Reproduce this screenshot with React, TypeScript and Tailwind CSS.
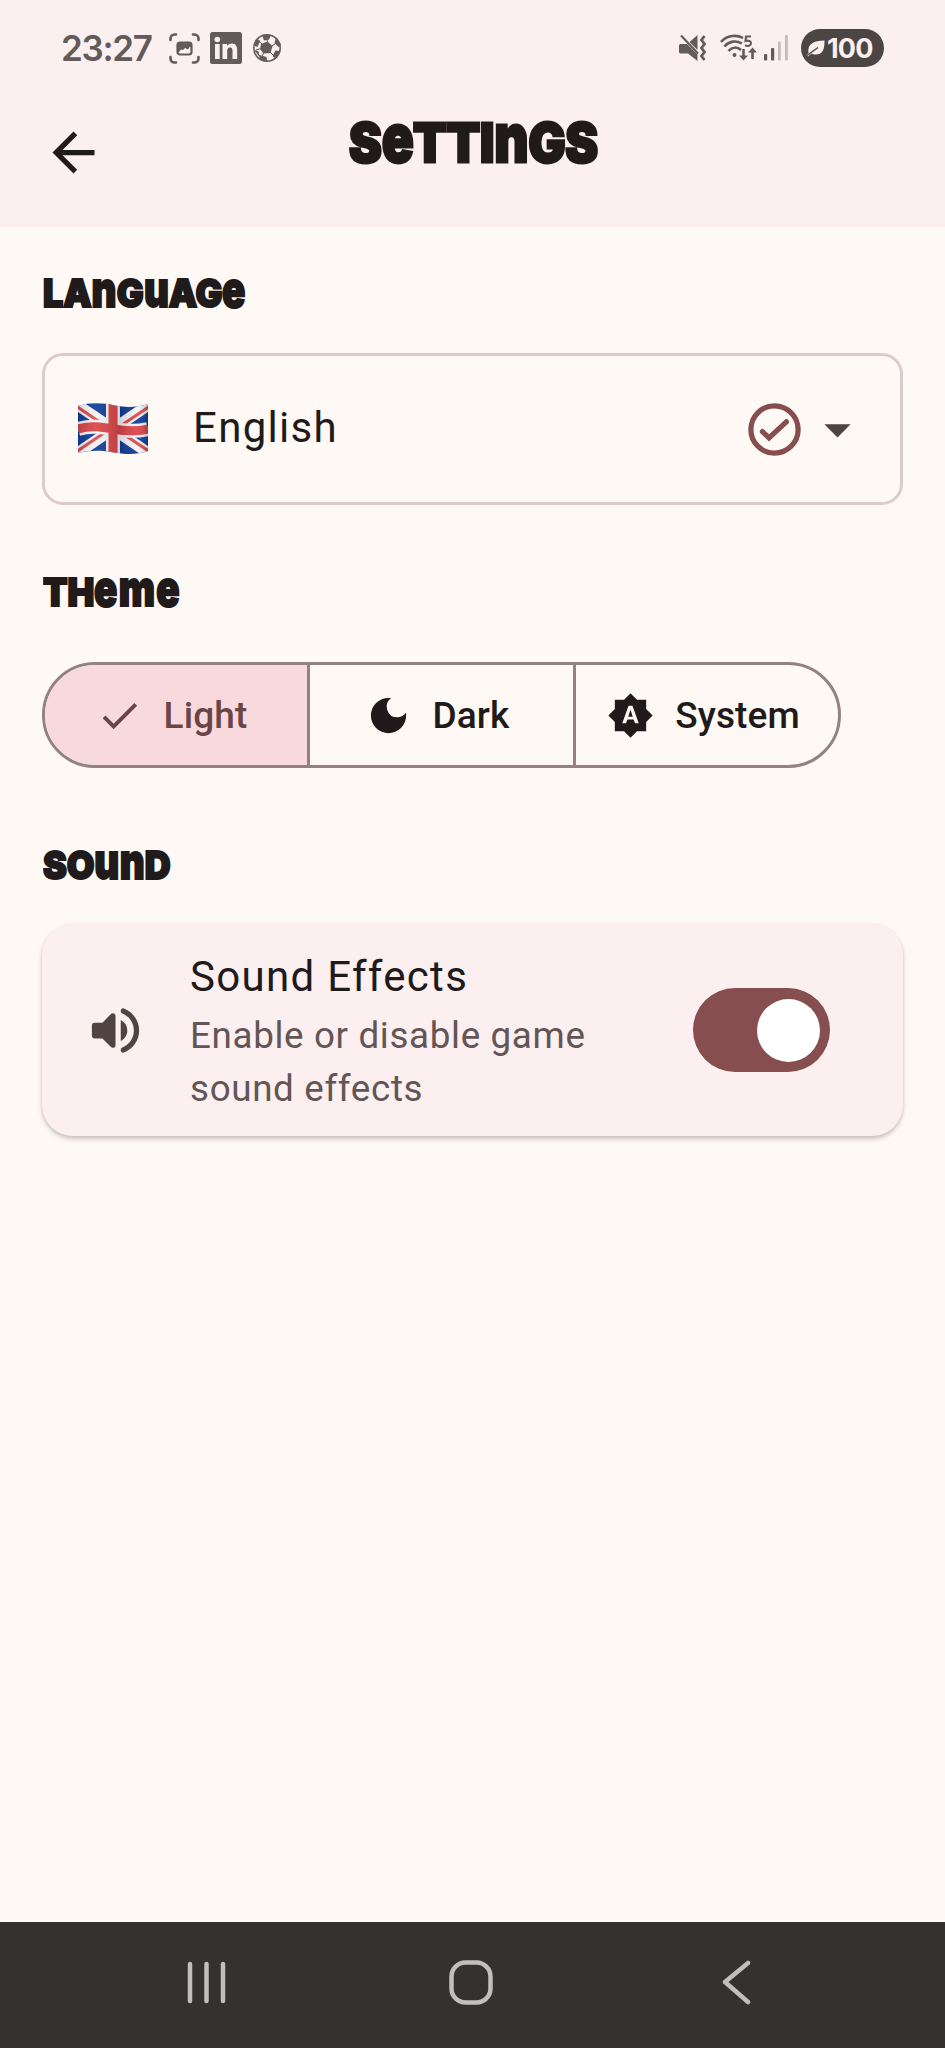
import React, { useState } from "react";

const FULL_HEIGHT_LOWERCASE = "enmu";

/* Unicase display lettering: some letters stay lowercase but reach cap height. */
function Unicase({ text, className }: { text: string; className: string }) {
  return (
    <span
      className={`inline-block origin-left whitespace-nowrap font-['Inter',sans-serif] font-black leading-none ${className}`}
    >
      {text.split("").map((ch, i) =>
        FULL_HEIGHT_LOWERCASE.includes(ch) ? (
          <span key={i} className="inline-block text-[1.28em] leading-none [scale:0.84_1] -mx-[0.05em]">
            {ch}
          </span>
        ) : (
          <span key={i} className="uppercase">
            {ch}
          </span>
        ),
      )}
    </span>
  );
}

function Material({ d, className }: { d: string; className: string }) {
  return (
    <svg viewBox="0 0 24 24" className={`shrink-0 ${className}`} fill="currentColor">
      <path d={d} />
    </svg>
  );
}

function CheckCircle() {
  return (
    <svg
      viewBox="0 0 24 24"
      className="h-[63px] w-[63px] shrink-0 text-[#874e50]"
      fill="none"
      stroke="currentColor"
      strokeWidth="2"
      strokeLinecap="round"
    >
      <circle cx="12" cy="12" r="9" />
      <path d="m7.400 12.800 2.500 2.400 6.600-6.100" />
    </svg>
  );
}

function ScanIcon() {
  return (
    <svg viewBox="0 0 31 31" className="h-[31px] w-[31px]" fill="none" stroke="currentColor" strokeWidth="2.6" strokeLinecap="round">
      <path d="M1.500 7V5.500a4 4 0 0 1 4-4H7M24 1.500h1.500a4 4 0 0 1 4 4V7M29.500 24v1.500a4 4 0 0 1-4 4H24M7 29.500H5.500a4 4 0 0 1-4-4V24" />
      <rect x="8.500" y="9.500" width="14" height="12" rx="2.500" strokeWidth="2.200" />
      <path d="M8.500 9.500h14v4.500h-2l-1.500 2.500-3-1.500-2 2-2-.5-2 2.500H8.500z" fill="currentColor" stroke="none" />
    </svg>
  );
}

function LinkedInIcon() {
  return (
    <svg viewBox="0 0 32 32" className="h-8 w-8">
      <rect width="32" height="32" rx="2.500" fill="currentColor" />
      <g fill="#fcefef">
        <circle cx="7.300" cy="7.500" r="2.800" />
        <path d="M5 12h4.700v15H5zM12.500 12H17v2.100c.9-1.500 2.500-2.500 4.800-2.500 4.400 0 5.400 2.900 5.400 6.900V27h-4.700v-7.500c0-2-.1-4-2.500-4s-2.800 1.900-2.800 3.900V27h-4.700z" />
      </g>
    </svg>
  );
}

function BallIcon() {
  return (
    <svg viewBox="0 0 30 30" className="h-[30px] w-[30px]" fill="currentColor">
      <circle cx="15" cy="15" r="13.200" fill="#fcefef" stroke="currentColor" strokeWidth="1.600" />
      <path d="m9 11 6.500-2.500 5 4.500-2 7-7 .5-3.500-4.500zM10 1.800l9 .3-2 4.400-5 1zM1.300 12l4-6 3 2-3 6zM24 4.500l5 7-2 3-4.500-4.500zM28.500 18l-5 8-3-3 3-5.500zM7.500 22l7 2 1 5-8-3zM1.500 16.500l5 2 1.500 6z" />
      <path d="m10 11-3-2.500M15.500 9l-1-4M20 13l4-3M18 19l4 4M12 19.500 10 23M9 15.500 4 17" stroke="currentColor" strokeWidth="1" />
    </svg>
  );
}

function MuteIcon() {
  return (
    <svg viewBox="0 0 28 28" className="h-7 w-7" fill="currentColor">
      <path d="M1.500 10H8l10.500 10.500V27L9 19.500H1.500Q0 19.500 0 18v-6.500q0-1.500 1.500-1.500zM10.500 8 18.500 1v15z" />
      <path d="m2 1.500 17 18" stroke="currentColor" strokeWidth="2.200" />
      <path d="m25.500 2-3 4 3 4-3 4 3 4-3 4 3 4" fill="none" stroke="currentColor" strokeWidth="2.800" />
    </svg>
  );
}

function WifiIcon() {
  return (
    <svg viewBox="0 0 38 28" className="h-7 w-[38px]" fill="none" stroke="currentColor" strokeWidth="2.600">
      <path d="M1 8C7 1 17 .5 23 4M4.500 12.500C9 7 16 6 22 9.500M8.500 17c3.500-4 8.500-4.500 12.500-1" />
      <circle cx="14.500" cy="21" r="2" fill="currentColor" stroke="none" />
      <path d="M31 2.500h-5l-.5 4.500c3-1 5.500 0 5.500 2.300 0 2.500-3 3.400-6 2" strokeWidth="2.100" />
      <path d="M23.500 15v8M32.500 25v-8" strokeWidth="2.600" />
      <path d="M19 21.500h9l-4.500 5zM28 18.500h9l-4.500-5z" fill="currentColor" stroke="none" />
    </svg>
  );
}

function SignalIcon() {
  return (
    <svg viewBox="0 0 26 28" className="h-7 w-[26px]" fill="currentColor">
      <rect x="1" y="20" width="3.200" height="6.500" rx="1" />
      <rect x="8" y="14" width="3.200" height="12.500" rx="1" />
      <rect x="15" y="7.500" width="2.800" height="19" rx="1" opacity=".35" />
      <rect x="22" y="1" width="2.800" height="25.500" rx="1" opacity=".35" />
    </svg>
  );
}

function LeafIcon() {
  return (
    <svg viewBox="0 0 20 18" className="h-[18px] w-5" fill="#fcefef">
      <path d="M18.500 1.500c0 8-1 14-9 14-1.500 0-3-.4-4-1L2 17.500.5 16l2-2C1 5 8 1.500 18.500 1.500z" />
      <path d="M1 16.500 12 8.500" stroke="#4b4543" strokeWidth="1.500" />
    </svg>
  );
}

function UnionJack() {
  return (
    <svg viewBox="0 0 70 52" className="h-[52px] w-[70px] shrink-0">
      <defs>
        <clipPath id="wave">
          <path d="M0 3C12-1 25 0 37 2.500 49 5 60 4 70 1v47c-11 4-23 3.500-34 1.500C24 47 12 47 0 50z" />
        </clipPath>
        <linearGradient id="shade" x1="0" x2="1">
          <stop offset="0" stopColor="#000" stopOpacity=".12" />
          <stop offset=".25" stopColor="#fff" stopOpacity=".08" />
          <stop offset=".6" stopColor="#000" stopOpacity=".14" />
          <stop offset=".85" stopColor="#fff" stopOpacity=".06" />
          <stop offset="1" stopColor="#000" stopOpacity=".2" />
        </linearGradient>
      </defs>
      <g clipPath="url(#wave)">
        <path fill="#0f3d97" d="M0 0h70v52H0z" />
        <path d="m-2 1 74 50M-2 51 72 1" stroke="#f5f3f6" strokeWidth="11" />
        <path d="m-2 3 34 23M72 49 38 26M-2 49l34-23M72 3 38 26" stroke="#dc4b4e" strokeWidth="3.200" />
        <path d="M35 0v52M0 26c13-4 24-2 35 0s23 3 35 0" fill="none" stroke="#f5f3f6" strokeWidth="14" />
        <path d="M35 0v52M0 26c13-4 24-2 35 0s23 3 35 0" fill="none" stroke="#db4447" strokeWidth="9" />
        <path fill="url(#shade)" d="M0 0h70v52H0z" />
      </g>
    </svg>
  );
}

const ICONS = {
  back: "M20 11H7.830l5.590-5.590L12 4l-8 8 8 8 1.410-1.410L7.830 13H20v-2z",
  caret: "m7 10 5 5 5-5z",
  check: "M9 16.170 4.830 12l-1.420 1.410L9 19 21 7l-1.410-1.410z",
  moon: "M12 3a9 9 0 1 0 9 9c0-.46-.04-.92-.1-1.360a5.389 5.389 0 0 1-4.400 2.260 5.403 5.403 0 0 1-3.140-9.800c-.44-.06-.9-.1-1.360-.1z",
  auto: "m10.850 12.650 2.300 0L12 9zM20 8.690V4h-4.690L12 .69 8.690 4H4v4.690L.69 12 4 15.310V20h4.690L12 23.310 15.310 20H20v-4.690L23.310 12 20 8.690zM14.300 16l-.7-2h-3.200l-.7 2H7.800L11 7h2l3.200 9h-1.900z",
  volume:
    "M3 10v4c0 .55.45 1 1 1h3l3.290 3.290c.63.63 1.710.18 1.710-.71V6.410c0-.89-1.080-1.340-1.710-.71L7 9H4c-.55 0-1 .45-1 1zm13.500 2A4.500 4.500 0 0 0 14 7.970v8.050c1.480-.73 2.500-2.250 2.500-4.020zM14 4.450v.2c0 .38.25.71.6.85C17.180 6.530 19 9.060 19 12s-1.820 5.470-4.400 6.500c-.36.14-.6.47-.6.85v.2c0 .63.63 1.070 1.210.85C18.600 19.110 21 15.840 21 12s-2.400-7.110-5.790-8.400c-.58-.23-1.210.22-1.210.85z",
};

const THEMES = [
  { label: "Light", icon: ICONS.moon },
  { label: "Dark", icon: ICONS.moon },
  { label: "System", icon: ICONS.auto },
];

const SECTION_LETTERING = "scale-x-[0.94] text-[38px] tracking-[0px] [-webkit-text-stroke:2px_currentColor]";

export default function App() {
  const [theme, setTheme] = useState("Light");
  const [sound, setSound] = useState(true);

  return (
    <div className="flex h-[2048px] w-[945px] flex-col overflow-hidden bg-[#fff9f6] font-['Roboto',sans-serif] text-[#201a1a]">
      <header className="h-[227px] shrink-0 bg-[#fcefef]">
        <div className="flex h-24 items-center justify-between pl-[61px] pr-[61px] text-[#625b5b]">
          <div className="flex items-center">
            <span className="w-[108px] font-['Inter',sans-serif] text-[35px] font-semibold leading-none tracking-[-1.300px]">23:27</span>
            <div className="flex items-center gap-[10px]">
              <ScanIcon />
              <LinkedInIcon />
              <BallIcon />
            </div>
          </div>
          <div className="flex items-center">
            <MuteIcon />
            <span className="ml-[13px]"><WifiIcon /></span>
            <span className="ml-[5px]"><SignalIcon /></span>
            <div className="ml-3 flex h-[38px] w-[83px] items-center rounded-full bg-[#4b4543] pl-[5px] text-[#fcefef]">
              <LeafIcon />
              <span className="ml-px font-['Inter',sans-serif] text-[27px] font-bold leading-none tracking-[-0.8px]">100</span>
            </div>
          </div>
        </div>
        <div className="grid grid-cols-[349px_1fr]">
          <button aria-label="Back" className="ml-[42px] mt-[25px] h-[63px] w-[63px]">
            <Material d={ICONS.back} className="h-[63px] w-[63px]" />
          </button>
          <h1 className="mt-[8px] h-[72px] leading-[72px]">
            <Unicase text="Settings" className="scale-x-[0.928] text-[53px] tracking-[-0.3px] [-webkit-text-stroke:2.800px_currentColor]" />
          </h1>
        </div>
      </header>

      <main className="flex-1 pl-[42px] pr-[42px]">
        <h2 className="flex h-[126px] items-center pl-px">
          <Unicase text="Language" className={SECTION_LETTERING} />
        </h2>
        <button className="flex h-[152px] w-full items-center rounded-[21px] border-3 border-[#dccbcb] pl-[33px] pr-[31px]">
          <UnionJack />
          <span className="-mt-[2px] ml-[45px] flex-1 text-left text-[42px] leading-none tracking-[1.300px]">English</span>
          <CheckCircle />
          <Material d={ICONS.caret} className="h-[63px] w-[63px] text-[#524343]" />
        </button>

        <h2 className="flex h-[157px] items-center pl-px pt-[12px]">
          <Unicase text="Theme" className={SECTION_LETTERING} />
        </h2>
        <div className="grid h-[106px] w-[799px] grid-cols-[262px_266px_1fr] overflow-hidden rounded-full border-3 border-[#938282] text-[37px] font-medium tracking-[0.100px]">
          {THEMES.map(({ label, icon }) => {
            const selected = theme === label;
            return (
              <button
                key={label}
                onClick={() => setTheme(label)}
                className={`flex items-center justify-center gap-[21px] border-l-3 border-[#938282] pr-[9px] first:border-l-0 last:pr-[7px] ${selected ? "bg-[#f9dadc] text-[#6b4447]" : ""}`}
              >
                <Material d={selected ? ICONS.check : icon} className="h-[47px] w-[47px]" />
                <span className="leading-none">{label}</span>
              </button>
            );
          })}
        </div>

        <h2 className="flex h-[156px] items-center pl-px pt-[32px]">
          <Unicase text="Sound" className={SECTION_LETTERING} />
        </h2>
        <section className="flex h-[212px] items-center rounded-[31px] bg-[#fcefef] pl-[42px] pr-[73px] shadow-[0_3px_4px_rgba(60,40,40,0.25),0_0_3px_rgba(60,40,40,0.06)]">
          <Material d={ICONS.volume} className="h-[63px] w-[63px] text-[#524343]" />
          <div className="ml-[43px] flex-1">
            <p className="text-[42px] leading-[63px] tracking-[1.300px]">Sound Effects</p>
            <p className="mt-[2px] w-[430px] text-[36.750px] leading-[52.500px] tracking-[0.660px] text-[#635555]">Enable or disable game sound effects</p>
          </div>
          <button
            role="switch"
            aria-checked={sound}
            aria-label="Sound Effects"
            onClick={() => setSound(!sound)}
            className={`flex h-[84px] w-[137px] items-center rounded-full bg-[#874e50] px-[10.500px] ${sound ? "justify-end" : "justify-start"}`}
          >
            <span className="h-[63px] w-[63px] rounded-full bg-white" />
          </button>
        </section>
      </main>

      <nav className="flex h-[126px] shrink-0 items-start bg-[#333230] pl-[187px] pt-[37px] text-[#c1bebb]">
        <svg viewBox="0 0 40 46" className="h-[46px] w-10" fill="none" stroke="currentColor" strokeWidth="4.500" strokeLinecap="round">
          <path d="M3 5v37M19.500 5v37M36 5v37" />
        </svg>
        <svg viewBox="0 0 46 46" className="ml-[221px] h-[46px] w-[46px]" fill="none" stroke="currentColor" strokeWidth="4.500">
          <rect x="3.500" y="3.500" width="39" height="40" rx="14" />
        </svg>
        <svg viewBox="0 0 32 46" className="ml-[227px] h-[46px] w-8" fill="none" stroke="currentColor" strokeWidth="4.500" strokeLinecap="round" strokeLinejoin="round">
          <path d="M27 4 4 23l23 20" />
        </svg>
      </nav>
    </div>
  );
}
